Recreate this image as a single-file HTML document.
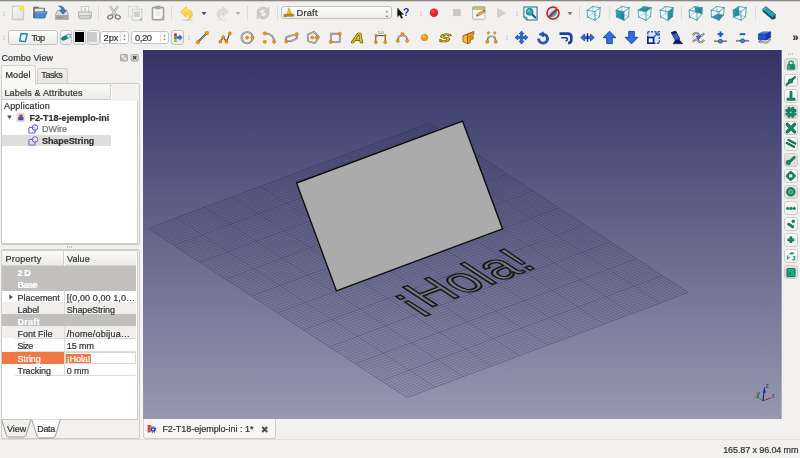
<!DOCTYPE html>
<html><head><meta charset="utf-8"><title>FreeCAD</title><style>
*{box-sizing:border-box;margin:0;padding:0}
html,body{width:800px;height:458px;overflow:hidden;background:#f2f1f0;font-family:"Liberation Sans",sans-serif;font-size:11px;color:#3c3c3c}
.a{position:absolute}
.t{position:absolute;white-space:nowrap;line-height:12px;-webkit-text-stroke:.22px currentColor}
.b{font-weight:bold}
.ic{position:absolute;width:16px;height:16px}
.sep{position:absolute;width:1px;height:14px;background:#dddbd8;top:5.6px}
.hd{position:absolute;width:2px;height:5px;background:repeating-linear-gradient(#d4d1cd 0 1px,transparent 1px 2px)}
.btn{position:absolute;border:1px solid #c4c1bc;border-radius:3px;background:linear-gradient(#fdfdfc,#ecebe9)}
.spin{position:absolute;border:1px solid #c9c6c1;border-radius:3px;background:#fff;height:12.2px;top:31.4px}
</style></head><body>
<div id="root" style="position:absolute;left:0;top:0;width:800px;height:458px;will-change:transform">
<div class="a" style="left:0;top:0;width:800px;height:1px;background:#8a8885"></div>
<div class="a" style="left:0;top:1px;width:800px;height:1px;background:#d5d3d0"></div>
<svg class="ic" style="left:10.0px;top:5.0px;width:16px;height:16px" viewBox="0 0 16 16"><defs><linearGradient id="gn" x1="0" y1="0" x2="1" y2="1"><stop offset="0" stop-color="#f6f6f5"/><stop offset="1" stop-color="#e2e2e0"/></linearGradient></defs><path d="M2.6 14.9H13.6" stroke="#cbc9c6" stroke-width="1"/><path d="M2.4 1.3H13.6V14.2H2.4Z" fill="url(#gn)" stroke="#bdbcb9" stroke-width=".8"/><circle cx="11.8" cy="3.4" r="3.1" fill="#f6ec50" opacity=".55"/><circle cx="11.8" cy="3.4" r="2.1" fill="#f4e62c"/></svg>
<svg class="ic" style="left:32.0px;top:5.0px;width:16px;height:16px" viewBox="0 0 16 16"><path d="M1.6 2H6.2L7.2 3.2H12.6V12.6H1.6Z" fill="#77787a" stroke="#5a5b5d" stroke-width=".7"/><path d="M3 3.8H11.6V9H3Z" fill="#efefee" stroke="#bdbdbb" stroke-width=".4"/><path d="M3.6 6.8H15.2L12.8 13H1.6Z" fill="#4d8ad6" stroke="#2c5c9e" stroke-width=".7" stroke-linejoin="round"/><path d="M4 7.6H14.2" stroke="#7aaae4" stroke-width=".7"/></svg>
<svg class="ic" style="left:54.0px;top:5.0px;width:16px;height:16px" viewBox="0 0 16 16"><path d="M1.6 9.6L3.4 5.4H12.6L14.4 9.6V14.4H1.6Z" fill="#dcdcda" stroke="#9a9a98" stroke-width=".8" stroke-linejoin="round"/><path d="M2 10H14V14H2Z" fill="#a9a9a7"/><path d="M3 12.4H9" stroke="#878785" stroke-width=".8"/><path d="M4.4 1C8.6 .8 10.4 2.6 10.4 5.2H12.6L9 9.2L5.4 5.2H7.6C7.6 3.2 6.6 1.8 4.4 1Z" fill="#3f7fd0" stroke="#2357a0" stroke-width=".6" stroke-linejoin="round"/></svg>
<svg class="ic" style="left:76.5px;top:5.0px;width:16px;height:16px" viewBox="0 0 16 16"><rect x="4.2" y="1.6" width="7.6" height="5.6" fill="#f6f6f5" stroke="#b4b4b2" stroke-width=".7"/><path d="M8 2.8V5.6M6.8 4.4L8 5.8L9.2 4.4" stroke="#b0b0ae" stroke-width=".8" fill="none"/><path d="M1.6 7H14.4V12.4H1.6Z" fill="#e4e4e2" stroke="#a4a4a2" stroke-width=".8" stroke-linejoin="round"/><rect x="2.8" y="10.6" width="10.4" height="3.4" fill="#d2d2d0" stroke="#a4a4a2" stroke-width=".6"/></svg>
<svg class="ic" style="left:105.5px;top:5.0px;width:16px;height:16px" viewBox="0 0 16 16"><path d="M4.2 1.2L9.8 10.2M11.8 1.2L6.2 10.2" stroke="#9c9c9a" stroke-width="2.2" fill="none"/><path d="M4.2 1.2L9.8 10.2M11.8 1.2L6.2 10.2" stroke="#dcdcda" stroke-width="1.1" fill="none"/><ellipse cx="4.2" cy="12" rx="2.6" ry="1.9" transform="rotate(-25 4.2 12)" fill="none" stroke="#7e7e7c" stroke-width="1.3"/><ellipse cx="11.8" cy="12" rx="2.6" ry="1.9" transform="rotate(25 11.8 12)" fill="none" stroke="#7e7e7c" stroke-width="1.3"/></svg>
<svg class="ic" style="left:127.0px;top:5.0px;width:16px;height:16px" viewBox="0 0 16 16"><rect x="1.6" y="1.4" width="9.2" height="10.6" fill="#f3f3f2" stroke="#cfcfcd" stroke-width=".8"/><rect x="5.2" y="4.2" width="9.6" height="11" fill="#f3f3f2" stroke="#c2c2c0" stroke-width=".8"/><rect x="7" y="6.4" width="6" height="5.6" fill="#cfcfcd"/><path d="M12 15.2L14.8 12.6V15.2Z" fill="#a8a8a6"/></svg>
<svg class="ic" style="left:149.5px;top:5.0px;width:16px;height:16px" viewBox="0 0 16 16"><rect x="2.4" y="2.6" width="11.2" height="12.2" rx=".8" fill="#efefee" stroke="#a09f9d" stroke-width="1.5"/><path d="M4.4 5H11.6V13H4.4Z" fill="#f7f7f6"/><path d="M5.4 7H10.4M5.4 8.8H10.4M5.4 10.6H9" stroke="#d6d6d4" stroke-width=".7"/><path d="M10.4 13.6L12.6 11.4V13.6Z" fill="#a09f9d"/><rect x="5.6" y="1.2" width="4.8" height="2.6" rx=".9" fill="#a8a7a5" stroke="#8c8b89" stroke-width=".6"/></svg>
<svg class="ic" style="left:178.5px;top:5.0px;width:16px;height:16px" viewBox="0 0 16 16"><ellipse cx="8.5" cy="15" rx="5.5" ry="1" fill="#d8d6d2"/><path d="M1.6 7L7.2 1.8V4.6C11.6 4.6 13.7 7 13.3 10C13 12.4 11.2 13.8 8.6 14.4C10.2 13.2 10.6 11.6 10 10.4C9.4 9.4 8.4 9.2 7.2 9.2V12.2Z" fill="#f6d838" stroke="#e6bc1e" stroke-width=".7" stroke-linejoin="round"/><path d="M3.2 6.8L6.6 3.6V5.3C9.5 5.3 11.5 6 12.3 8" stroke="#fbee8a" stroke-width=".8" fill="none"/></svg>
<svg class="ic" style="left:195.7px;top:5.0px;width:16px;height:16px" viewBox="0 0 16 16"><path d="M5.4 7.1H10.6L8 10.3Z" fill="#555"/></svg>
<svg class="ic" style="left:213.5px;top:5.0px;width:16px;height:16px" viewBox="0 0 16 16"><ellipse cx="7.5" cy="15" rx="5" ry=".9" fill="#e6e4e1"/><path d="M14.2 6.6L9 1.8V4.4C4.8 4.4 2.6 6.6 3 9.6C3.3 11.8 5 13.2 7.4 13.8C6 12.6 5.6 11.2 6.2 10C6.8 9 7.8 8.8 9 8.8V11.6Z" fill="#dddcda" stroke="#cdccc9" stroke-width=".7" stroke-linejoin="round"/></svg>
<svg class="ic" style="left:230.1px;top:5.0px;width:16px;height:16px" viewBox="0 0 16 16"><path d="M5.4 7.1H10.6L8 10.3Z" fill="#b4b2af"/></svg>
<svg class="ic" style="left:254.5px;top:5.0px;width:16px;height:16px" viewBox="0 0 16 16"><g fill="#cdccca" stroke="#b9b8b5" stroke-width=".5" stroke-linejoin="round"><path d="M2 8C2 4.4 4.6 2 8 2C9.8 2 11.2 2.7 12.2 3.7L14 2V7.4H8.6L10.5 5.5C9.8 4.8 9 4.5 8 4.5C6 4.5 4.6 6 4.6 8Z"/><path d="M14 8C14 11.6 11.4 14 8 14C6.2 14 4.8 13.3 3.8 12.3L2 14V8.6H7.4L5.5 10.5C6.2 11.2 7 11.5 8 11.5C10 11.5 11.4 10 11.4 8Z"/></g></svg>
<svg class="ic" style="left:395.4px;top:5.0px;width:16px;height:16px" viewBox="0 0 16 16"><path d="M2.5 3L2.5 11.8L4.6 9.9L6.2 13.4L7.6 12.8L6 9.4H8.6Z" fill="#111" stroke="#111" stroke-width=".3"/><text x="8" y="11" font-family="Liberation Sans, sans-serif" font-weight="bold" font-size="10.5" fill="#1c2fa0">?</text></svg>
<svg class="ic" style="left:426.0px;top:5.0px;width:16px;height:16px" viewBox="0 0 16 16"><circle cx="8" cy="7.7" r="4.2" fill="#e92424"/><circle cx="7.2" cy="6.6" r="1.8" fill="#f66a6a" opacity=".6"/></svg>
<svg class="ic" style="left:448.5px;top:5.0px;width:16px;height:16px" viewBox="0 0 16 16"><rect x="4.6" y="4.4" width="6.8" height="6.4" fill="#cbcac8" stroke="#bcbbb9" stroke-width=".5"/></svg>
<svg class="ic" style="left:470.5px;top:5.0px;width:16px;height:16px" viewBox="0 0 16 16"><path d="M2 14.8H14" stroke="#d6d4d0" stroke-width="1"/><rect x="1.6" y="1.8" width="12.4" height="12.4" rx=".8" fill="#f8f7f4" stroke="#b0ada6" stroke-width=".8"/><path d="M1.6 2.6Q1.6 1.8 2.4 1.8H13.2Q14 1.8 14 2.6V4.4H1.6Z" fill="#cdbd7c" stroke="#a89a5c" stroke-width=".5"/><path d="M5.4 11.2L6.4 8.8L12.6 5.2L13.8 7L7.8 10.8Z" fill="#eaa43a" stroke="#8a5a1c" stroke-width=".5" stroke-linejoin="round"/><path d="M12.2 5.4L13.6 4.6L14.6 6.4L13.6 7Z" fill="#e04040"/><path d="M5.4 11.2L6 9.8L6.8 10.8Z" fill="#333"/></svg>
<svg class="ic" style="left:493.0px;top:5.0px;width:16px;height:16px" viewBox="0 0 16 16"><path d="M4.6 3.6L12.4 8L4.6 12.4Z" fill="#d2d1cf" stroke="#c2c1be" stroke-width=".6"/></svg>
<svg class="ic" style="left:522.5px;top:5.5px;width:15px;height:15px" viewBox="0 0 16 16"><path d="M1 1H15V15H4.2L1 11.8Z" fill="#f7fbfc" stroke="#1a6a84" stroke-width="1.1"/><path d="M1 11.8H4.2V15" fill="none" stroke="#1a6a84" stroke-width=".8"/><path d="M9.6 8.8L13 12.3" stroke="#0e5f78" stroke-width="2.2" stroke-linecap="round"/><circle cx="7.1" cy="6.2" r="3.7" fill="#2ba6c0" stroke="#0e6f88" stroke-width=".9"/><circle cx="6.2" cy="5.2" r="1.4" fill="#6cc8dc" opacity=".8"/></svg>
<svg class="ic" style="left:545.0px;top:5.0px;width:16px;height:16px" viewBox="0 0 16 16"><ellipse cx="8.5" cy="14.8" rx="5" ry=".9" fill="#d8d6d2"/><circle cx="8" cy="8" r="6" fill="#c4e8ee" stroke="#cc1c1c" stroke-width="1.6"/><path d="M4 11.6C4.6 8 8 5.4 12.4 4.6C12.8 8.6 9.6 12.4 5.2 12.6Z" fill="#2aa8bc"/><path d="M11 3L13.6 1.6L12.6 4.4Z" fill="#f0c020"/><path d="M3.8 12.2L12.2 3.8" stroke="#cc1c1c" stroke-width="1.7"/></svg>
<svg class="ic" style="left:562.3px;top:5.0px;width:16px;height:16px" viewBox="0 0 16 16"><path d="M5.4 7.1H10.6L8 10.3Z" fill="#7c7c7a"/></svg>
<svg class="ic" style="left:586.0px;top:5.0px;width:16px;height:16px" viewBox="0 0 16 16"><defs><linearGradient id="cg" x1="0" y1="0" x2="1" y2="1"><stop offset="0" stop-color="#35a9be"/><stop offset="1" stop-color="#16788e"/></linearGradient></defs><polygon points="1.2,5.2 6.7,1.5 14.2,2.7 13.5,11.7 9,15.3 1.5,12" fill="#f2f9fa"/><path d="M6.8 8.7L6.7 1.5M6.8 8.7L1.5 12M6.8 8.7L13.5 11.7" stroke="#3a9aaa" stroke-opacity=".6" stroke-width=".7" fill="none"/><path d="M1.2 5.2L9 6.7M9 6.7L9 15.3M9 15.3L1.5 12M1.5 12L1.2 5.2M1.2 5.2L6.7 1.5M6.7 1.5L14.2 2.7M14.2 2.7L9 6.7M14.2 2.7L13.5 11.7M13.5 11.7L9 15.3" stroke="#2a8c9e" stroke-width=".75" fill="none" stroke-linejoin="round" stroke-linecap="round"/></svg>
<svg class="ic" style="left:615.0px;top:5.0px;width:16px;height:16px" viewBox="0 0 16 16"><defs><linearGradient id="cg" x1="0" y1="0" x2="1" y2="1"><stop offset="0" stop-color="#35a9be"/><stop offset="1" stop-color="#16788e"/></linearGradient></defs><polygon points="1.2,5.2 6.7,1.5 14.2,2.7 13.5,11.7 9,15.3 1.5,12" fill="#f2f9fa"/><polygon points="1.2,5.2 9,6.7 9,15.3 1.5,12" fill="url(#cg)"/><path d="M6.8 8.7L6.7 1.5M6.8 8.7L1.5 12M6.8 8.7L13.5 11.7" stroke="#3a9aaa" stroke-opacity=".6" stroke-width=".7" fill="none"/><path d="M1.2 5.2L9 6.7M9 6.7L9 15.3M9 15.3L1.5 12M1.5 12L1.2 5.2M1.2 5.2L6.7 1.5M6.7 1.5L14.2 2.7M14.2 2.7L9 6.7M14.2 2.7L13.5 11.7M13.5 11.7L9 15.3" stroke="#2a8c9e" stroke-width=".75" fill="none" stroke-linejoin="round" stroke-linecap="round"/></svg>
<svg class="ic" style="left:637.0px;top:5.0px;width:16px;height:16px" viewBox="0 0 16 16"><defs><linearGradient id="cg" x1="0" y1="0" x2="1" y2="1"><stop offset="0" stop-color="#35a9be"/><stop offset="1" stop-color="#16788e"/></linearGradient></defs><polygon points="1.2,5.2 6.7,1.5 14.2,2.7 13.5,11.7 9,15.3 1.5,12" fill="#f2f9fa"/><polygon points="1.2,5.2 6.7,1.5 14.2,2.7 9,6.7" fill="url(#cg)"/><path d="M6.8 8.7L6.7 1.5M6.8 8.7L1.5 12M6.8 8.7L13.5 11.7" stroke="#3a9aaa" stroke-opacity=".6" stroke-width=".7" fill="none"/><path d="M1.2 5.2L9 6.7M9 6.7L9 15.3M9 15.3L1.5 12M1.5 12L1.2 5.2M1.2 5.2L6.7 1.5M6.7 1.5L14.2 2.7M14.2 2.7L9 6.7M14.2 2.7L13.5 11.7M13.5 11.7L9 15.3" stroke="#2a8c9e" stroke-width=".75" fill="none" stroke-linejoin="round" stroke-linecap="round"/></svg>
<svg class="ic" style="left:659.0px;top:5.0px;width:16px;height:16px" viewBox="0 0 16 16"><defs><linearGradient id="cg" x1="0" y1="0" x2="1" y2="1"><stop offset="0" stop-color="#35a9be"/><stop offset="1" stop-color="#16788e"/></linearGradient></defs><polygon points="1.2,5.2 6.7,1.5 14.2,2.7 13.5,11.7 9,15.3 1.5,12" fill="#f2f9fa"/><polygon points="9,6.7 14.2,2.7 13.5,11.7 9,15.3" fill="url(#cg)"/><path d="M6.8 8.7L6.7 1.5M6.8 8.7L1.5 12M6.8 8.7L13.5 11.7" stroke="#3a9aaa" stroke-opacity=".6" stroke-width=".7" fill="none"/><path d="M1.2 5.2L9 6.7M9 6.7L9 15.3M9 15.3L1.5 12M1.5 12L1.2 5.2M1.2 5.2L6.7 1.5M6.7 1.5L14.2 2.7M14.2 2.7L9 6.7M14.2 2.7L13.5 11.7M13.5 11.7L9 15.3" stroke="#2a8c9e" stroke-width=".75" fill="none" stroke-linejoin="round" stroke-linecap="round"/></svg>
<svg class="ic" style="left:688.0px;top:5.0px;width:16px;height:16px" viewBox="0 0 16 16"><defs><linearGradient id="cg" x1="0" y1="0" x2="1" y2="1"><stop offset="0" stop-color="#35a9be"/><stop offset="1" stop-color="#16788e"/></linearGradient></defs><polygon points="1.2,5.2 6.7,1.5 14.2,2.7 14,8.8 9,15.3 1.5,12" fill="#f2f9fa"/><polygon points="6.7,1.5 14.2,2.7 14,8.8 7.2,7.2" fill="url(#cg)"/><path d="M7.2 7.2L6.7 1.5M7.2 7.2L1.5 12M7.2 7.2L14 8.8" stroke="#3a9aaa" stroke-opacity=".6" stroke-width=".7" fill="none"/><path d="M1.2 5.2L9 6.7M9 6.7L9 15.3M9 15.3L1.5 12M1.5 12L1.2 5.2M1.2 5.2L6.7 1.5M6.7 1.5L14.2 2.7M14.2 2.7L9 6.7M14.2 2.7L14 8.8M14 8.8L9 15.3" stroke="#2a8c9e" stroke-width=".75" fill="none" stroke-linejoin="round" stroke-linecap="round"/></svg>
<svg class="ic" style="left:710.0px;top:5.0px;width:16px;height:16px" viewBox="0 0 16 16"><defs><linearGradient id="cg" x1="0" y1="0" x2="1" y2="1"><stop offset="0" stop-color="#35a9be"/><stop offset="1" stop-color="#16788e"/></linearGradient></defs><polygon points="1.2,5.2 6.7,1.5 14.2,2.7 13.6,9.8 9,15.3 1.5,12" fill="#f2f9fa"/><polygon points="1.5,12 9,15.3 13.6,9.8 7.4,9" fill="url(#cg)"/><path d="M7.4 9L6.7 1.5M7.4 9L1.5 12M7.4 9L13.6 9.8" stroke="#3a9aaa" stroke-opacity=".6" stroke-width=".7" fill="none"/><path d="M1.2 5.2L9 6.7M9 6.7L9 15.3M9 15.3L1.5 12M1.5 12L1.2 5.2M1.2 5.2L6.7 1.5M6.7 1.5L14.2 2.7M14.2 2.7L9 6.7M14.2 2.7L13.6 9.8M13.6 9.8L9 15.3" stroke="#2a8c9e" stroke-width=".75" fill="none" stroke-linejoin="round" stroke-linecap="round"/></svg>
<svg class="ic" style="left:732.0px;top:5.0px;width:16px;height:16px" viewBox="0 0 16 16"><defs><linearGradient id="cg" x1="0" y1="0" x2="1" y2="1"><stop offset="0" stop-color="#35a9be"/><stop offset="1" stop-color="#16788e"/></linearGradient></defs><polygon points="1.2,5.2 6.7,1.5 14.2,2.7 13.5,11.7 9,15.3 1.5,12" fill="#f2f9fa"/><polygon points="1.2,5.2 6.7,1.5 7.4,10.2 1.5,12" fill="url(#cg)"/><path d="M7.4 10.2L6.7 1.5M7.4 10.2L1.5 12M7.4 10.2L13.5 11.7" stroke="#3a9aaa" stroke-opacity=".6" stroke-width=".7" fill="none"/><path d="M1.2 5.2L9 6.7M9 6.7L9 15.3M9 15.3L1.5 12M1.5 12L1.2 5.2M1.2 5.2L6.7 1.5M6.7 1.5L14.2 2.7M14.2 2.7L9 6.7M14.2 2.7L13.5 11.7M13.5 11.7L9 15.3" stroke="#2a8c9e" stroke-width=".75" fill="none" stroke-linejoin="round" stroke-linecap="round"/></svg>
<svg class="ic" style="left:761.0px;top:5.0px;width:16px;height:16px" viewBox="0 0 16 16"><path d="M1.6 4.4L4.8 1.6L14.6 9.6V13.6L11.2 14.8L1.6 6.4Z" fill="#154a5c"/><path d="M1.6 4.4L4.8 1.6L14.6 9.6L11.4 12.4Z" fill="#25a2b8" stroke="#0f6478" stroke-width=".6" stroke-linejoin="round"/><path d="M2.6 4.4L5 2.6" stroke="#7fd4e0" stroke-width=".8"/></svg>
<div class="sep" style="left:98px"></div>
<div class="sep" style="left:171px"></div>
<div class="sep" style="left:247px"></div>
<div class="sep" style="left:277px"></div>
<div class="sep" style="left:579px"></div>
<div class="sep" style="left:609px"></div>
<div class="sep" style="left:681px"></div>
<div class="sep" style="left:755px"></div>
<div class="hd" style="left:2.5px;top:11px"></div>
<div class="hd" style="left:419.5px;top:11px"></div>
<div class="hd" style="left:515.5px;top:11px"></div>
<div class="hd" style="left:2.5px;top:35.3px"></div>
<div class="hd" style="left:187.8px;top:35.3px"></div>
<div class="hd" style="left:505.5px;top:35.3px"></div>
<div class="btn" style="left:280.6px;top:5.6px;width:111.3px;height:13.9px"></div>
<svg class="ic" style="left:283.0px;top:6.5px;width:12px;height:12px" viewBox="0 0 16 16"><path d="M7.3 1L11.9 9.8H6Z" fill="#f4cc10" stroke="#a07800" stroke-width=".6" stroke-linejoin="round"/><path d="M9 2V9.8" stroke="#c89a00" stroke-width=".6"/><path d="M1.3 9.8H14.3V12.3H4.3V12.9H1.3Z" fill="#d0820a" stroke="#8a5200" stroke-width=".6"/></svg>
<div class="t" style="left:296.5px;top:7.23px;font-size:9.3px;letter-spacing:0.212px;color:#353535;">Draft</div>
<svg class="a" style="left:383.5px;top:7px;width:6px;height:12px" viewBox="0 0 6 12"><path d="M1.5 5.3L3 3.4L4.5 5.3ZM1.5 8.7L3 10.6L4.5 8.7Z" fill="#888"/></svg>
<div class="btn" style="left:7.7px;top:30.2px;width:50.3px;height:14.4px"></div>
<svg class="ic" style="left:18.4px;top:31.8px;width:11px;height:11px" viewBox="0 0 16 16"><polygon points="4.6,2.2 13.4,3 10.6,14 2.4,13" fill="#f4fafa" stroke="#2496a4" stroke-width="2.1" stroke-linejoin="round"/><polygon points="4.6,2.2 13.4,3 10.6,14 2.4,13" fill="none" stroke="#0a4a56" stroke-width="1" stroke-dasharray="1.2 1.6"/></svg>
<div class="t" style="left:31.5px;top:31.63px;font-size:9.3px;letter-spacing:-0.647px;color:#353535;">Top</div>
<div class="btn" style="left:60px;top:30px;width:12px;height:15px"></div>
<svg class="ic" style="left:60.5px;top:32.0px;width:10.5px;height:10.5px" viewBox="0 0 16 16"><g transform="rotate(-24 8 8)"><rect x="6.4" y="5.2" width="9.4" height="5.4" rx="2.7" fill="#d4ecec" stroke="#1a8a94" stroke-width="1.1"/><rect x=".4" y="5.4" width="9" height="5.2" rx="2.6" fill="#128a92" stroke="#0a5a64" stroke-width=".8"/></g></svg>
<div class="btn" style="left:73px;top:30px;width:13px;height:15px"></div><div class="a" style="left:74.7px;top:32.4px;width:9.3px;height:9.6px;background:#000"></div>
<div class="btn" style="left:86.5px;top:30px;width:13px;height:15px"></div><div class="a" style="left:88.3px;top:32.4px;width:8.7px;height:9.6px;background:#ccc"></div>
<div class="spin" style="left:100.4px;width:28.6px"></div>
<div class="t" style="left:103.5px;top:31.73px;font-size:9.3px;letter-spacing:0.003px;color:#353535;">2px</div>
<div class="spin" style="left:131.2px;width:37.6px"></div>
<div class="t" style="left:135.0px;top:31.63px;font-size:9.3px;letter-spacing:-0.366px;color:#353535;">0,20</div>
<svg class="a" style="left:122.0px;top:32px;width:5px;height:11px" viewBox="0 0 5 11"><path d="M1.2 4.4L2.5 2.8L3.8 4.4ZM1.2 6.8L2.5 8.4L3.8 6.8Z" fill="#777"/></svg>
<div class="a" style="left:120.0px;top:31.8px;width:1px;height:10.6px;background:#e2e0dd"></div>
<svg class="a" style="left:161.5px;top:32px;width:5px;height:11px" viewBox="0 0 5 11"><path d="M1.2 4.4L2.5 2.8L3.8 4.4ZM1.2 6.8L2.5 8.4L3.8 6.8Z" fill="#777"/></svg>
<div class="a" style="left:159.5px;top:31.8px;width:1px;height:10.6px;background:#e2e0dd"></div>
<div class="btn" style="left:170.5px;top:30px;width:13px;height:15px"></div>
<svg class="ic" style="left:171.5px;top:32.0px;width:11px;height:11px" viewBox="0 0 16 16"><rect x="3" y="2" width="4" height="4" fill="#e02020"/><rect x="3" y="6.2" width="4" height="4" fill="#20b020"/><rect x="3" y="10.4" width="4" height="4" fill="#e0a020"/><path d="M7.5 6.5H11V4L15 8L11 12V9.5H7.5Z" fill="#2f6fe0" stroke="#0a2a80" stroke-width=".5"/></svg>
<svg class="ic" style="left:195.0px;top:29.5px;width:15px;height:15px" viewBox="0 0 16 16"><path d="M3 13L12.6 3.4" stroke="#4a4a4a" stroke-width="2"/><path d="M3 13L12.6 3.4" stroke="#c4c4c4" stroke-width=".7"/><circle cx="3" cy="13" r="1.9" fill="#f5a000" stroke="#a86400" stroke-width=".5"/><circle cx="12.8" cy="3.2" r="1.9" fill="#f5a000" stroke="#a86400" stroke-width=".5"/></svg>
<svg class="ic" style="left:217.5px;top:29.5px;width:15px;height:15px" viewBox="0 0 16 16"><path d="M2.5 12.5L5.6 7.6L9 12.5L12.6 3.6" stroke="#4a4a4a" stroke-width="1.3" fill="none"/><circle cx="2.5" cy="12.5" r="1.7" fill="#f5a000" stroke="#a86400" stroke-width=".5"/><circle cx="5.6" cy="7.6" r="1.7" fill="#f5a000" stroke="#a86400" stroke-width=".5"/><circle cx="9" cy="12.5" r="1.7" fill="#f5a000" stroke="#a86400" stroke-width=".5"/><circle cx="12.6" cy="3.6" r="1.7" fill="#f5a000" stroke="#a86400" stroke-width=".5"/></svg>
<svg class="ic" style="left:239.5px;top:29.5px;width:15px;height:15px" viewBox="0 0 16 16"><path d="M1.6 8.2A6 6 0 1 0 13.6 8.2A6 6 0 1 0 1.6 8.2Z" fill="none" stroke="#707070" stroke-width="2.0" stroke-linejoin="round" /><path d="M1.6 8.2A6 6 0 1 0 13.6 8.2A6 6 0 1 0 1.6 8.2Z" fill="none" stroke="#cfcfcf" stroke-width="0.90" stroke-linejoin="round" /><circle cx="7.6" cy="8.2" r="1.7" fill="#f5a000" stroke="#a86400" stroke-width=".5"/><circle cx="13.2" cy="8.2" r="1.7" fill="#f5a000" stroke="#a86400" stroke-width=".5"/></svg>
<svg class="ic" style="left:261.5px;top:29.5px;width:15px;height:15px" viewBox="0 0 16 16"><path d="M3 3.6C9 3.6 13 7 13 12.6" fill="none" stroke="#707070" stroke-width="2.0" stroke-linejoin="round" /><path d="M3 3.6C9 3.6 13 7 13 12.6" fill="none" stroke="#cfcfcf" stroke-width="0.90" stroke-linejoin="round" /><circle cx="3" cy="3.6" r="1.7" fill="#f5a000" stroke="#a86400" stroke-width=".5"/><circle cx="13" cy="12.6" r="1.7" fill="#f5a000" stroke="#a86400" stroke-width=".5"/><circle cx="3" cy="12.6" r="1.7" fill="#f5a000" stroke="#a86400" stroke-width=".5"/></svg>
<svg class="ic" style="left:283.5px;top:29.5px;width:15px;height:15px" viewBox="0 0 16 16"><g transform="rotate(-14 8 8.6)"><path d="M1.6 8.6A6.4 2.7 0 1 0 14.4 8.6A6.4 2.7 0 1 0 1.6 8.6Z" fill="none" stroke="#707070" stroke-width="1.9" stroke-linejoin="round" /><path d="M1.6 8.6A6.4 2.7 0 1 0 14.4 8.6A6.4 2.7 0 1 0 1.6 8.6Z" fill="none" stroke="#cfcfcf" stroke-width="0.85" stroke-linejoin="round" /></g><circle cx="2.6" cy="12.2" r="1.7" fill="#f5a000" stroke="#a86400" stroke-width=".5"/><circle cx="13.6" cy="4.4" r="1.7" fill="#f5a000" stroke="#a86400" stroke-width=".5"/></svg>
<svg class="ic" style="left:306.0px;top:29.5px;width:15px;height:15px" viewBox="0 0 16 16"><path d="M1.8 4.8L8.4 2L13.8 7.6L9.6 14L2.2 12Z" fill="none" stroke="#707070" stroke-width="1.9" stroke-linejoin="round" /><path d="M1.8 4.8L8.4 2L13.8 7.6L9.6 14L2.2 12Z" fill="none" stroke="#cfcfcf" stroke-width="0.85" stroke-linejoin="round" /><circle cx="6.6" cy="8" r="1.7" fill="#f5a000" stroke="#a86400" stroke-width=".5"/><circle cx="11.2" cy="8" r="1.7" fill="#f5a000" stroke="#a86400" stroke-width=".5"/></svg>
<svg class="ic" style="left:328.0px;top:29.5px;width:15px;height:15px" viewBox="0 0 16 16"><path d="M3 4H12.6V12.6H3Z" fill="none" stroke="#707070" stroke-width="1.9" stroke-linejoin="round" /><path d="M3 4H12.6V12.6H3Z" fill="none" stroke="#cfcfcf" stroke-width="0.85" stroke-linejoin="round" /><circle cx="3" cy="12.8" r="1.7" fill="#f5a000" stroke="#a86400" stroke-width=".5"/><circle cx="12.6" cy="4" r="1.7" fill="#f5a000" stroke="#a86400" stroke-width=".5"/></svg>
<svg class="ic" style="left:351.0px;top:29.5px;width:15px;height:15px" viewBox="0 0 16 16"><text x="0" y="14" font-family="Liberation Sans, sans-serif" font-weight="bold" font-style="italic" font-size="16" fill="#f0c800" stroke="#5a4800" stroke-width=".6" transform="scale(1.22 1)">A</text></svg>
<svg class="ic" style="left:372.5px;top:29.5px;width:15px;height:15px" viewBox="0 0 16 16"><path d="M3 5V13M13 5V13M3 6H13" stroke="#333" stroke-width="1" fill="none"/><text x="5" y="4.5" font-family="Liberation Sans, sans-serif" font-size="4.5" fill="#444">1.0</text><circle cx="3" cy="13" r="1.6" fill="#f5a000" stroke="#a86400" stroke-width=".5"/><circle cx="13" cy="13" r="1.6" fill="#f5a000" stroke="#a86400" stroke-width=".5"/><circle cx="3" cy="6" r="1.2" fill="#f5a000" stroke="#a86400" stroke-width=".5"/><circle cx="13" cy="6" r="1.2" fill="#f5a000" stroke="#a86400" stroke-width=".5"/></svg>
<svg class="ic" style="left:394.5px;top:29.5px;width:15px;height:15px" viewBox="0 0 16 16"><path d="M3 11.6C2.4 3.6 13.6 3.6 13 11.6" fill="none" stroke="#707070" stroke-width="1.9" stroke-linejoin="round" /><path d="M3 11.6C2.4 3.6 13.6 3.6 13 11.6" fill="none" stroke="#cfcfcf" stroke-width="0.85" stroke-linejoin="round" /><circle cx="3" cy="11.6" r="1.7" fill="#f5a000" stroke="#a86400" stroke-width=".5"/><circle cx="13" cy="11.6" r="1.7" fill="#f5a000" stroke="#a86400" stroke-width=".5"/><circle cx="8" cy="4.2" r="1.7" fill="#f5a000" stroke="#a86400" stroke-width=".5"/></svg>
<svg class="ic" style="left:416.5px;top:29.5px;width:15px;height:15px" viewBox="0 0 16 16"><circle cx="8" cy="8" r="3.4" fill="#f5a000" stroke="#a86400" stroke-width=".6"/><circle cx="7" cy="7" r="1.3" fill="#ffd470"/></svg>
<svg class="ic" style="left:439.0px;top:29.5px;width:15px;height:15px" viewBox="0 0 16 16"><text x="0" y="12.6" font-family="Liberation Sans, sans-serif" font-style="italic" font-weight="bold" font-size="12.5" fill="#f0cc00" stroke="#4a3c00" stroke-width=".55" transform="translate(1 0) skewX(-12) scale(1.62 1)">S</text></svg>
<svg class="ic" style="left:461.0px;top:29.5px;width:15px;height:15px" viewBox="0 0 16 16"><path d="M2 6.2L7 4.2V14.6L2 12.4Z" fill="#ffb830" stroke="#6a4200" stroke-width=".6" stroke-linejoin="round"/><path d="M7 4.2L13.8 1.6V5L10 6.4V7.8L13 6.8V9.6L10 10.6V13.4L7 14.6Z" fill="#f09c00" stroke="#6a4200" stroke-width=".6" stroke-linejoin="round"/><path d="M2 6.2L8.6 3.6L13.8 1.6" fill="none" stroke="#6a4200" stroke-width=".5"/></svg>
<svg class="ic" style="left:483.5px;top:29.5px;width:15px;height:15px" viewBox="0 0 16 16"><path d="M3.5 12.6C4 4.6 12 4.6 12.5 12.6" fill="none" stroke="#707070" stroke-width="1.7" stroke-linejoin="round" /><path d="M3.5 12.6C4 4.6 12 4.6 12.5 12.6" fill="none" stroke="#cfcfcf" stroke-width="0.77" stroke-linejoin="round" /><path d="M3.5 12.6L4.6 3M12.5 12.6L11.4 3" stroke="#555" stroke-width=".5" stroke-dasharray="1 1"/><circle cx="3.5" cy="12.6" r="1.7" fill="#f5a000" stroke="#a86400" stroke-width=".5"/><circle cx="12.5" cy="12.6" r="1.7" fill="#f5a000" stroke="#a86400" stroke-width=".5"/><circle cx="4.6" cy="3" r="1.2" fill="#f5a000" stroke="#a86400" stroke-width=".5"/><circle cx="11.4" cy="3" r="1.2" fill="#f5a000" stroke="#a86400" stroke-width=".5"/></svg>
<svg class="ic" style="left:513.5px;top:29.5px;width:15px;height:15px" viewBox="0 0 16 16"><path d="M8 1L10.6 4.2H9V7H11.8V5.4L15 8L11.8 10.6V9H9V11.8H10.6L8 15L5.4 11.8H7V9H4.2V10.6L1 8L4.2 5.4V7H7V4.2H5.4Z" fill="#2f6fe0" stroke="#0a2a80" stroke-width=".6" stroke-linejoin="round"/></svg>
<svg class="ic" style="left:535.0px;top:29.5px;width:15px;height:15px" viewBox="0 0 16 16"><path d="M3.9 9.3A4.7 4.7 0 1 0 8.6 4.6" fill="none" stroke="#0a2a80" stroke-width="3"/><path d="M3.9 9.3A4.7 4.7 0 1 0 8.6 4.6" fill="none" stroke="#2f62d4" stroke-width="2"/><path d="M4.2 4.6L8.9 2V7.3Z" fill="#2f62d4" stroke="#0a2a80" stroke-width=".6" stroke-linejoin="round"/></svg>
<svg class="ic" style="left:557.5px;top:29.5px;width:15px;height:15px" viewBox="0 0 16 16"><path d="M1.6 3.8H10.6C13.2 3.8 14.2 5.2 14.2 7.4V10.6C14.2 12.6 13 13.8 10.8 14.2" fill="none" stroke="#1c3ea4" stroke-width="2.8"/><path d="M3.4 8.2H8.4C9.6 8.2 10 8.8 10 9.8C10 11 9.4 11.6 8 11.8" fill="none" stroke="#1c3ea4" stroke-width="1.7"/></svg>
<svg class="ic" style="left:579.5px;top:29.5px;width:15px;height:15px" viewBox="0 0 16 16"><path d="M.8 8L4.8 4.3V6.8H11.2V4.3L15.2 8L11.2 11.7V9.2H4.8V11.7Z" fill="#2f6fe0" stroke="#0a2a80" stroke-width=".7" stroke-linejoin="round"/><path d="M8 3.5V12.5" stroke="#0a2a80" stroke-width="1.5"/></svg>
<svg class="ic" style="left:602.0px;top:29.5px;width:15px;height:15px" viewBox="0 0 16 16"><path d="M8 1.2L14.8 8.2H11V14.5H5V8.2H1.2Z" fill="#2f6fe0" stroke="#0a2a80" stroke-width=".8" stroke-linejoin="round"/></svg>
<svg class="ic" style="left:624.0px;top:29.5px;width:15px;height:15px" viewBox="0 0 16 16"><path d="M8 14.8L14.8 7.8H11V1.5H5V7.8H1.2Z" fill="#2f6fe0" stroke="#0a2a80" stroke-width=".8" stroke-linejoin="round"/></svg>
<svg class="ic" style="left:646.0px;top:29.5px;width:15px;height:15px" viewBox="0 0 16 16"><rect x="1.8" y="1.8" width="12.4" height="12.4" fill="#dbe6fa" stroke="#2a5bc0" stroke-width="1.5" stroke-dasharray="2.2 1.4"/><rect x="2" y="8" width="6" height="6" fill="#fff" stroke="#0a2a80" stroke-width="1.8"/><path d="M8.5 7.5L12.5 3.5M9.5 3.3H12.7V6.5" stroke="#2a5bc0" stroke-width="1.4" fill="none"/></svg>
<svg class="ic" style="left:668.5px;top:29.5px;width:15px;height:15px" viewBox="0 0 16 16"><path d="M4.4 14.6L8.6 8L14.6 14.6Z" fill="#0c1c6a" stroke="#060e40" stroke-width=".6" stroke-linejoin="round"/><path d="M2.4 2.6L7.2 1.2L11.6 9.6L7 11.4Z" fill="#2f66d8" stroke="#0a1a60" stroke-width=".8" stroke-linejoin="round"/><path d="M2.4 2.6L7.2 1.2L8.2 3.2L3.4 4.8Z" fill="#101a50"/></svg>
<svg class="ic" style="left:690.5px;top:29.5px;width:15px;height:15px" viewBox="0 0 16 16"><path d="M2 5.6C4.6 2.4 6.4 2.4 8 4.6C9.6 6.8 11.4 6.8 14 3.6" fill="none" stroke="#707070" stroke-width="2.3" stroke-linejoin="round" /><path d="M2 5.6C4.6 2.4 6.4 2.4 8 4.6C9.6 6.8 11.4 6.8 14 3.6" fill="none" stroke="#cfcfcf" stroke-width="1.03" stroke-linejoin="round" /><path d="M2 12.6C4.6 9.4 6.4 9.4 8 11.6C9.6 13.8 11.4 13.8 14 10.6" fill="none" stroke="#707070" stroke-width="2.3" stroke-linejoin="round" /><path d="M2 12.6C4.6 9.4 6.4 9.4 8 11.6C9.6 13.8 11.4 13.8 14 10.6" fill="none" stroke="#cfcfcf" stroke-width="1.03" stroke-linejoin="round" /><path d="M5.4 6.6H10.6L8 10.2Z" fill="#2f6fe0" stroke="#0a2a80" stroke-width=".6"/></svg>
<svg class="ic" style="left:712.5px;top:29.5px;width:15px;height:15px" viewBox="0 0 16 16"><path d="M1 12H15" stroke="#7c7c7c" stroke-width="1.8"/><circle cx="8" cy="12" r="2.2" fill="#3f83f0" stroke="#0a2a80" stroke-width=".6"/><path d="M8 1.5V7.5M5 4.5H11" stroke="#1c50c8" stroke-width="2"/></svg>
<svg class="ic" style="left:734.5px;top:29.5px;width:15px;height:15px" viewBox="0 0 16 16"><path d="M1 11.5H15" stroke="#7c7c7c" stroke-width="1.8"/><circle cx="8" cy="11.5" r="2.2" fill="#3f83f0" stroke="#0a2a80" stroke-width=".6"/><path d="M5 4.5H11" stroke="#1c50c8" stroke-width="2"/></svg>
<svg class="ic" style="left:756.5px;top:29.5px;width:15px;height:15px" viewBox="0 0 16 16"><path d="M2 12L6 10H14.5L10.5 12.8Z M2 12V13.2L10.5 14.2L14.5 11.2" fill="#e8e8e8" stroke="#555" stroke-width=".6"/><path d="M1.5 4.5L6 2H14.5L10 4.5Z" fill="#5a92f0" stroke="#0a2a80" stroke-width=".6"/><path d="M1.5 4.5H10V10.5H1.5Z" fill="#1c50d8" stroke="#0a2a80" stroke-width=".6"/><path d="M10 4.5L14.5 2V8L10 10.5Z" fill="#123aa8" stroke="#0a2a80" stroke-width=".6"/></svg>
<div class="t b" style="left:792.5px;top:31.36px;font-size:11px;letter-spacing:-0.617px;color:#333;">»</div>
<div class="a" style="left:142px;top:49px;width:640px;height:1px;background:#faf9f8"></div><div class="a" style="left:141px;top:49px;width:2px;height:390px;background:#f8f7f6"></div>
<svg id="view" width="638.7" height="369.2" viewBox="0 0 638.7 369.2" style="position:absolute;left:143px;top:50px">
<defs><linearGradient id="bg" x1="0" y1="0" x2="0" y2="1"><stop offset="0" stop-color="#333366"/><stop offset="1" stop-color="#9898b0"/></linearGradient><filter id="nop" x="-0.1" y="-0.1" width="1.2" height="1.2"><feOffset dx="0" dy="0"/></filter></defs>
<rect width="638.7" height="369.2" fill="url(#bg)"/>
<path d="M8.01 177.35L266.91 346.55M7.79 180.09L288.89 74.99M10.82 176.30L269.72 345.50M10.38 181.78L291.48 76.68M13.63 175.25L272.53 344.45M12.97 183.48L294.07 78.38M16.44 174.20L275.34 343.40M15.56 185.17L296.66 80.07M19.25 173.15L278.15 342.35M18.14 186.86L299.25 81.76M22.07 172.09L280.97 341.29M20.73 188.55L301.83 83.45M24.88 171.04L283.78 340.24M23.32 190.24L304.42 85.14M27.69 169.99L286.59 339.19M25.91 191.94L307.01 86.84M30.50 168.94L289.40 338.14M28.50 193.63L309.60 88.53M36.12 166.84L295.02 336.04M33.68 197.01L314.78 91.91M38.93 165.79L297.83 334.99M36.27 198.70L317.37 93.60M41.74 164.74L300.64 333.94M38.86 200.40L319.96 95.30M44.55 163.69L303.45 332.89M41.45 202.09L322.55 96.99M47.36 162.63L306.26 331.83M44.03 203.78L325.13 98.68M50.18 161.58L309.08 330.78M46.62 205.47L327.72 100.37M52.99 160.53L311.89 329.73M49.21 207.16L330.31 102.06M55.80 159.48L314.70 328.68M51.80 208.86L332.90 103.76M58.61 158.43L317.51 327.63M54.39 210.55L335.49 105.45M64.23 156.33L323.13 325.53M59.57 213.93L340.67 108.83M67.04 155.28L325.94 324.48M62.16 215.62L343.26 110.52M69.85 154.23L328.75 323.43M64.75 217.32L345.85 112.22M72.66 153.18L331.56 322.38M67.34 219.01L348.44 113.91M75.47 152.12L334.38 321.32M69.92 220.70L351.02 115.60M78.29 151.07L337.19 320.27M72.51 222.39L353.61 117.29M81.10 150.02L340.00 319.22M75.10 224.08L356.20 118.98M83.91 148.97L342.81 318.17M77.69 225.78L358.79 120.68M86.72 147.92L345.62 317.12M80.28 227.47L361.38 122.37M92.34 145.82L351.24 315.02M85.46 230.85L366.56 125.75M95.15 144.77L354.05 313.97M88.05 232.54L369.15 127.44M97.96 143.72L356.86 312.92M90.64 234.24L371.74 129.14M100.77 142.67L359.67 311.87M93.23 235.93L374.33 130.83M103.58 141.62L362.48 310.81M95.81 237.62L376.91 132.52M106.40 140.56L365.30 309.76M98.40 239.31L379.50 134.21M109.21 139.51L368.11 308.71M100.99 241.00L382.09 135.90M112.02 138.46L370.92 307.66M103.58 242.70L384.68 137.60M114.83 137.41L373.73 306.61M106.17 244.39L387.27 139.29M120.45 135.31L379.35 304.51M111.35 247.77L392.45 142.67M123.26 134.26L382.16 303.46M113.94 249.46L395.04 144.36M126.07 133.21L384.97 302.41M116.53 251.16L397.63 146.06M128.88 132.16L387.78 301.36M119.12 252.85L400.22 147.75M131.69 131.11L390.60 300.31M121.70 254.54L402.80 149.44M134.51 130.05L393.41 299.25M124.29 256.23L405.39 151.13M137.32 129.00L396.22 298.20M126.88 257.92L407.98 152.82M140.13 127.95L399.03 297.15M129.47 259.62L410.57 154.52M142.94 126.90L401.84 296.10M132.06 261.31L413.16 156.21M148.56 124.80L407.46 294.00M137.24 264.69L418.34 159.59M151.37 123.75L410.27 292.95M139.83 266.38L420.93 161.28M154.18 122.70L413.08 291.90M142.42 268.08L423.52 162.98M156.99 121.65L415.89 290.85M145.01 269.77L426.11 164.67M159.81 120.59L418.70 289.79M147.59 271.46L428.69 166.36M162.62 119.54L421.52 288.74M150.18 273.15L431.28 168.05M165.43 118.49L424.33 287.69M152.77 274.84L433.87 169.74M168.24 117.44L427.14 286.64M155.36 276.54L436.46 171.44M171.05 116.39L429.95 285.59M157.95 278.23L439.05 173.13M176.67 114.29L435.57 283.49M163.13 281.61L444.23 176.51M179.48 113.24L438.38 282.44M165.72 283.30L446.82 178.20M182.29 112.19L441.19 281.39M168.31 285.00L449.41 179.90M185.10 111.14L444.00 280.34M170.90 286.69L452.00 181.59M187.91 110.09L446.81 279.28M173.49 288.38L454.59 183.28M190.73 109.03L449.63 278.23M176.07 290.07L457.17 184.97M193.54 107.98L452.44 277.18M178.66 291.76L459.76 186.66M196.35 106.93L455.25 276.13M181.25 293.46L462.35 188.36M199.16 105.88L458.06 275.08M183.84 295.15L464.94 190.05M204.78 103.78L463.68 272.98M189.02 298.53L470.12 193.43M207.59 102.73L466.49 271.93M191.61 300.22L472.71 195.12M210.40 101.68L469.30 270.88M194.20 301.92L475.30 196.82M213.21 100.63L472.11 269.83M196.79 303.61L477.89 198.51M216.02 99.57L474.92 268.77M199.38 305.30L480.48 200.20M218.84 98.52L477.74 267.72M201.96 306.99L483.06 201.89M221.65 97.47L480.55 266.67M204.55 308.68L485.65 203.58M224.46 96.42L483.36 265.62M207.14 310.38L488.24 205.28M227.27 95.37L486.17 264.57M209.73 312.07L490.83 206.97M232.89 93.27L491.79 262.47M214.91 315.45L496.01 210.35M235.70 92.22L494.60 261.42M217.50 317.14L498.60 212.04M238.51 91.17L497.41 260.37M220.09 318.84L501.19 213.74M241.32 90.12L500.22 259.32M222.68 320.53L503.78 215.43M244.13 89.06L503.03 258.26M225.26 322.22L506.37 217.12M246.95 88.01L505.85 257.21M227.85 323.91L508.95 218.81M249.76 86.96L508.66 256.16M230.44 325.60L511.54 220.50M252.57 85.91L511.47 255.11M233.03 327.30L514.13 222.20M255.38 84.86L514.28 254.06M235.62 328.99L516.72 223.89M261.00 82.76L519.90 251.96M240.80 332.37L521.90 227.27M263.81 81.71L522.71 250.91M243.39 334.06L524.49 228.96M266.62 80.66L525.52 249.86M245.98 335.76L527.08 230.66M269.43 79.61L528.33 248.81M248.57 337.45L529.67 232.35M272.25 78.56L531.14 247.75M251.15 339.14L532.25 234.04M275.06 77.50L533.96 246.70M253.74 340.83L534.84 235.73M277.87 76.45L536.77 245.65M256.33 342.52L537.43 237.42M280.68 75.40L539.58 244.60M258.92 344.22L540.02 239.12M283.49 74.35L542.39 243.55M261.51 345.91L542.61 240.81" stroke="#1e1e46" stroke-opacity=".29" stroke-width=".5" fill="none"/>
<path d="M5.20 178.40L264.10 347.60M5.20 178.40L286.30 73.30M33.31 167.89L292.21 337.09M31.09 195.32L312.19 90.22M61.42 157.38L320.32 326.58M56.98 212.24L338.08 107.14M89.53 146.87L348.43 316.07M82.87 229.16L363.97 124.06M117.64 136.36L376.54 305.56M108.76 246.08L389.86 140.98M145.75 125.85L404.65 295.05M134.65 263.00L415.75 157.90M173.86 115.34L432.76 284.54M160.54 279.92L441.64 174.82M201.97 104.83L460.87 274.03M186.43 296.84L467.53 191.74M230.08 94.32L488.98 263.52M212.32 313.76L493.42 208.66M258.19 83.81L517.09 253.01M238.21 330.68L519.31 225.58M286.30 73.30L545.20 242.50M264.10 347.60L545.20 242.50" stroke="#1e1e46" stroke-opacity=".46" stroke-width=".65" fill="none"/>
<g filter="url(#nop)"><text transform="matrix(2.8110,-1.0510,2.5890,1.6920,270.2,263.8)" font-family="Liberation Sans, sans-serif" font-size="16.7" fill="#76767c" stroke="#15151b" stroke-width=".6">¡Hola!</text></g>
<polygon points="153.6,133.0 319.6,71.2 359.6,178.9 193.4,240.8" fill="#ababab" stroke="#0c0c0c" stroke-width="1.35" stroke-linejoin="miter"/>
<g filter="url(#nop)" transform="translate(620,350.8)" font-family="Liberation Sans, sans-serif" font-size="7" fill="#3a3a44">
<path d="M0 0L7.8-2.8" stroke="#a82222" stroke-width="1"/><path d="M0 0L-7-4.4" stroke="#1e9e2a" stroke-width="1"/><path d="M-7.6-4.8L-4.6-4.2L-5.6-2.6Z" fill="#1e9e2a"/><path d="M0 0L1.5-13" stroke="#1a1aa4" stroke-width="1.1"/><path d="M1.6-13.6L.2-8.2L2.6-8Z" fill="#1a1aa4"/>
<text x="8.6" y="-2.6">x</text><text x="-6.4" y="-5.2">y</text><text x="2.6" y="-12.4">z</text></g>
</svg>
<div class="t" style="left:1.5px;top:51.73px;font-size:9.0px;letter-spacing:0.072px;color:#353535;">Combo View</div>
<svg class="a" style="left:120px;top:53.8px;width:19px;height:8px" viewBox="0 0 19 8"><rect x=".4" y=".3" width="7" height="6.8" rx="1.2" fill="#c2c1bf" stroke="#8f8e8c" stroke-width=".7"/><rect x="1.6" y="1.4" width="2" height="2" fill="#f4f4f3"/><rect x="4.2" y="4" width="2" height="2" fill="#f4f4f3"/><path d="M3.4 3.2L4.6 4.4" stroke="#e8e8e7" stroke-width=".8"/><rect x="11.2" y=".3" width="7" height="6.8" rx="1.2" fill="#dcdbd9" stroke="#8f8e8c" stroke-width=".7"/><path d="M13 2L16.4 5.4M16.4 2L13 5.4" stroke="#3c3c3c" stroke-width="1.2"/></svg>
<div class="a" style="left:36.5px;top:67.5px;width:31px;height:16px;border:1px solid #d0cdc9;border-bottom:none;border-radius:3px 3px 0 0;background:linear-gradient(#efeeec,#e6e4e1)"></div>
<div class="a" style="left:1px;top:83px;width:139px;height:162px;border:1px solid #d0cdc9;border-radius:2px;background:#f2f1f0"></div>
<div class="a" style="left:0.8px;top:65px;width:35.4px;height:19.5px;border:1px solid #d4d1cd;border-bottom:none;border-radius:3px 3px 0 0;background:#f8f8f7"></div>
<div class="t" style="left:5.4px;top:69.03px;font-size:9.0px;letter-spacing:0.147px;color:#353535;">Model</div>
<div class="t" style="left:41.3px;top:69.03px;font-size:9.0px;letter-spacing:-0.401px;color:#353535;">Tasks</div>
<div class="a" style="left:1.4px;top:84.5px;width:137.1px;height:159.5px;background:#fff;border:1px solid #cfccc8"></div>
<div class="a" style="left:2.2px;top:85px;width:109.3px;height:15px;background:linear-gradient(#fafaf9,#ecebe9);border-right:1px solid #d5d2ce;border-bottom:1px solid #cdcac6"></div>
<div class="a" style="left:111.5px;top:85px;width:26.5px;height:15.5px;background:#f3f2f1"></div>
<div class="t" style="left:4.4px;top:87.33px;font-size:9.0px;letter-spacing:0.170px;color:#353535;">Labels &amp; Attributes</div>
<div class="t" style="left:4.0px;top:100.23px;font-size:9.0px;letter-spacing:0.177px;color:#353535;">Application</div>
<svg class="a" style="left:6.9px;top:115.3px;width:5px;height:5px" viewBox="0 0 5 5"><path d="M.3 .6H4.7L2.5 4.4Z" fill="#505050"/></svg>
<svg class="ic" style="left:16.3px;top:113.0px;width:9.2px;height:9.2px" viewBox="0 0 16 16"><rect x="1.6" y=".8" width="12.8" height="14.4" rx=".6" fill="#e2e2e1" stroke="#c4c4c2" stroke-width=".8"/><ellipse cx="8.6" cy="4.6" rx="3.2" ry="2.2" fill="#e02828"/><path d="M4 6.8H12.8V12.6H4Z" fill="#2238b8"/><path d="M4 8.6H12.8M4 10.6H12.8" stroke="#7c8ce0" stroke-width=".7"/></svg>
<div class="t b" style="left:29.5px;top:112.03px;font-size:9.0px;letter-spacing:0.017px;color:#333;">F2-T18-ejemplo-ini</div>
<svg class="ic" style="left:27.8px;top:124.2px;width:10.5px;height:10.5px" viewBox="0 0 16 16"><rect x="1.4" y="5.2" width="9.4" height="8.6" rx=".8" fill="none" stroke="#5444f4" stroke-width="1.5"/><circle cx="10.6" cy="5.4" r="4.2" fill="#fff" fill-opacity=".55" stroke="#5444f4" stroke-width="1.5"/></svg>
<div class="t" style="left:42.0px;top:123.33px;font-size:9.0px;letter-spacing:0.001px;color:#6e6e6e;">DWire</div>
<div class="a" style="left:2.2px;top:135.1px;width:109.3px;height:11.3px;background:#e0dedc"></div>
<svg class="ic" style="left:27.8px;top:135.9px;width:10.5px;height:10.5px" viewBox="0 0 16 16"><rect x="1.4" y="5.2" width="9.4" height="8.6" rx=".8" fill="none" stroke="#7454cc" stroke-width="1.5"/><circle cx="10.6" cy="5.4" r="4.2" fill="#fff" fill-opacity=".55" stroke="#7454cc" stroke-width="1.5"/></svg>
<div class="t b" style="left:42.0px;top:135.03px;font-size:9.0px;letter-spacing:-0.070px;color:#333;">ShapeString</div>
<div class="a" style="left:67px;top:246px;width:6px;height:2px;background:repeating-linear-gradient(90deg,#c4c1bd 0 1px,transparent 1px 2px)"></div>
<div class="a" style="left:1px;top:249px;width:139px;height:190px;border:1px solid #d0cdc9;border-radius:2px"></div>
<div class="a" style="left:1.4px;top:249.5px;width:136.6px;height:170.3px;background:#fff;border:1px solid #d2cfcb;border-right:1.6px solid #cfccc8;border-bottom:1.6px solid #cbc8c4"></div>
<div class="a" style="left:2.4px;top:250.5px;width:62.1px;height:15px;background:linear-gradient(#fafaf9,#ecebe9);border-right:1px solid #d5d2ce;border-bottom:1px solid #d5d2ce"></div>
<div class="a" style="left:64.5px;top:250.5px;width:71.9px;height:15px;background:linear-gradient(#fafaf9,#ecebe9);border-bottom:1px solid #d5d2ce"></div>
<div class="t" style="left:5.4px;top:252.63px;font-size:9.0px;letter-spacing:0.270px;color:#353535;">Property</div>
<div class="t" style="left:67.0px;top:252.63px;font-size:9.0px;letter-spacing:0.088px;color:#353535;">Value</div>
<div class="a" style="left:2.4px;top:265.5px;width:134px;height:25.3px;background:#c1c0be"></div>
<div class="t b" style="left:17.6px;top:266.73px;font-size:9.0px;letter-spacing:-0.402px;color:#fff;">2 D</div>
<div class="t b" style="left:17.6px;top:278.53px;font-size:9.0px;letter-spacing:-0.538px;color:#fff;">Base</div>
<div class="a" style="left:15px;top:301.7px;width:121.4px;height:1px;background:#dddbd8"></div>
<div class="a" style="left:64px;top:290.8px;width:1px;height:11.6px;background:#dddbd8"></div>
<div class="a" style="left:2.4px;top:302.4px;width:134px;height:11.9px;background:#efeeed"></div>
<div class="a" style="left:15px;top:313.6px;width:121.4px;height:1px;background:#dddbd8"></div>
<div class="a" style="left:64px;top:302.4px;width:1px;height:11.9px;background:#dddbd8"></div>
<div class="a" style="left:2.4px;top:314.3px;width:134px;height:12.0px;background:#c1c0be"></div>
<div class="a" style="left:2.4px;top:326.3px;width:134px;height:12.1px;background:#efeeed"></div>
<div class="a" style="left:15px;top:337.7px;width:121.4px;height:1px;background:#dddbd8"></div>
<div class="a" style="left:64px;top:326.3px;width:1px;height:12.1px;background:#dddbd8"></div>
<div class="a" style="left:15px;top:351.1px;width:121.4px;height:1px;background:#dddbd8"></div>
<div class="a" style="left:64px;top:338.4px;width:1px;height:13.4px;background:#dddbd8"></div>
<div class="a" style="left:15px;top:363.3px;width:121.4px;height:1px;background:#dddbd8"></div>
<div class="a" style="left:64px;top:351.8px;width:1px;height:12.2px;background:#dddbd8"></div>
<div class="a" style="left:15px;top:375.3px;width:121.4px;height:1px;background:#dddbd8"></div>
<div class="a" style="left:64px;top:364px;width:1px;height:12.0px;background:#dddbd8"></div>
<svg class="a" style="left:8.5px;top:294px;width:4px;height:6px" viewBox="0 0 4 6"><path d="M.3 .4L3.8 3L.3 5.6Z" fill="#444"/></svg>
<div class="t" style="left:17.6px;top:291.53px;font-size:9.0px;letter-spacing:-0.040px;color:#353535;">Placement</div>
<div class="t" style="left:66.7px;top:291.53px;font-size:9.0px;letter-spacing:0.084px;color:#353535;">[(0,00 0,00 1,0…</div>
<div class="t" style="left:17.6px;top:303.63px;font-size:9.0px;letter-spacing:-0.155px;color:#353535;">Label</div>
<div class="t" style="left:66.7px;top:303.63px;font-size:9.0px;letter-spacing:-0.123px;color:#353535;">ShapeString</div>
<div class="t b" style="left:17.6px;top:315.63px;font-size:9.0px;letter-spacing:0.225px;color:#fff;">Draft</div>
<div class="t" style="left:17.6px;top:328.13px;font-size:9.0px;letter-spacing:-0.001px;color:#353535;">Font File</div>
<div class="t" style="left:66.7px;top:328.13px;font-size:9.0px;letter-spacing:0.231px;color:#353535;">/home/obijua…</div>
<div class="t" style="left:17.6px;top:340.43px;font-size:9.0px;letter-spacing:-0.636px;color:#353535;">Size</div>
<div class="t" style="left:66.7px;top:340.43px;font-size:9.0px;letter-spacing:-0.051px;color:#353535;">15 mm</div>
<div class="a" style="left:2.4px;top:352.1px;width:61.6px;height:11.8px;background:#f07746"></div>
<div class="a" style="left:65px;top:352.3px;width:71.2px;height:11.7px;background:#fff;border:1px solid #d8d5d1"></div>
<div class="a" style="left:66.2px;top:353.6px;width:24.4px;height:9.8px;background:#f07746"></div>
<div class="t" style="left:17.6px;top:353.13px;font-size:9.0px;letter-spacing:-0.062px;color:#fff;">String</div>
<div class="t" style="left:66.7px;top:353.13px;font-size:9.0px;letter-spacing:-0.101px;color:#fff;">¡Hola!</div>
<div class="t" style="left:17.6px;top:364.93px;font-size:9.0px;letter-spacing:-0.111px;color:#353535;">Tracking</div>
<div class="t" style="left:66.7px;top:364.93px;font-size:9.0px;letter-spacing:-0.066px;color:#353535;">0 mm</div>
<svg class="a" style="left:0;top:419px;width:70px;height:20px" viewBox="0 0 70 20"><path d="M1.8 1L6.6 16.5Q7.2 18 8.8 18H23.5Q25.2 18 25.8 16.5L30.8 1" fill="#f2f1f0" stroke="#85827d" stroke-width=".8"/><path d="M31.7 .5L37.2 17.3Q37.9 18.9 39.5 18.9H53Q54.6 18.9 55.2 17.3L60.4 .5" fill="#fff" stroke="#85827d" stroke-width=".8"/></svg>
<div class="t" style="left:6.9px;top:422.53px;font-size:9.0px;letter-spacing:0.019px;color:#353535;">View</div>
<div class="t" style="left:37.2px;top:422.53px;font-size:9.0px;letter-spacing:-0.303px;color:#353535;">Data</div>
<div class="a" style="left:788px;top:52.5px;width:5px;height:2px;background:repeating-linear-gradient(90deg,#c9c6c2 0 1px,transparent 1px 2px)"></div>
<div class="btn" style="left:783.7px;top:57.5px;width:13.9px;height:13.7px;border-color:#cfccc7;background:linear-gradient(#e6e4e1,#dedbd7)"></div>
<svg class="a" style="left:783.7px;top:57.5px;width:14px;height:14px" viewBox="0 0 14 14"><path d="M4.9 6.8V5.4C4.9 3.8 5.8 3 7.05 3C8.3 3 9.2 3.8 9.2 5.4V6.8" fill="none" stroke="#3aa488" stroke-width="1.5"/><rect x="3.4" y="6.5" width="7.3" height="4.8" rx=".6" fill="#0f8a6a" stroke="#0a5e48" stroke-width=".5"/><rect x="4.2" y="7.2" width="1.6" height="3.4" fill="#5cc0a4" opacity=".8"/></svg>
<div class="btn" style="left:783.7px;top:73.5px;width:13.9px;height:13.7px;border-color:#cfccc7;background:linear-gradient(#fdfdfc,#f0efed)"></div>
<svg class="a" style="left:783.7px;top:73.5px;width:14px;height:14px" viewBox="0 0 14 14"><path d="M2.6 10.8L10.8 3.2" stroke="#0a5e48" stroke-width="2.0999999999999996" stroke-linecap="round" fill="none"/><path d="M2.6 10.8L10.8 3.2" stroke="#0f8a6a" stroke-width="1.0999999999999999" stroke-linecap="round" fill="none"/><path d="M4.3 9.2L5.1 5.3L9.1 4.8L8.3 8.7Z" fill="#0f8a6a" stroke="#0a5e48" stroke-width=".8" stroke-linejoin="round"/></svg>
<div class="btn" style="left:783.7px;top:89.4px;width:13.9px;height:13.7px;border-color:#cfccc7;background:linear-gradient(#fdfdfc,#f0efed)"></div>
<svg class="a" style="left:783.7px;top:89.4px;width:14px;height:14px" viewBox="0 0 14 14"><path d="M7 3V10" stroke="#0a5e48" stroke-width="2.7" stroke-linecap="round" fill="none"/><path d="M7 3V10" stroke="#0f8a6a" stroke-width="1.7" stroke-linecap="round" fill="none"/><path d="M2.8 10.2H11.3" stroke="#0a5e48" stroke-width="2.9000000000000004" stroke-linecap="butt" fill="none"/><path d="M2.8 10.2H11.3" stroke="#0f8a6a" stroke-width="1.9000000000000001" stroke-linecap="butt" fill="none"/></svg>
<div class="btn" style="left:783.7px;top:105.4px;width:13.9px;height:13.7px;border-color:#cfccc7;background:linear-gradient(#e6e4e1,#dedbd7)"></div>
<svg class="a" style="left:783.7px;top:105.4px;width:14px;height:14px" viewBox="0 0 14 14"><path d="M5.1 3.2V11.2M8.8 3.2V11.2M2.9 5.4H11M2.9 9.1H11" stroke="#0a5e48" stroke-width="3.0" stroke-linecap="round" fill="none"/><path d="M5.1 3.2V11.2M8.8 3.2V11.2M2.9 5.4H11M2.9 9.1H11" stroke="#0f8a6a" stroke-width="1.9999999999999998" stroke-linecap="round" fill="none"/><rect x="6.3" y="6.6" width="1.3" height="1.3" fill="#eef6f3"/></svg>
<div class="btn" style="left:783.7px;top:121.4px;width:13.9px;height:13.7px;border-color:#cfccc7;background:linear-gradient(#fdfdfc,#f0efed)"></div>
<svg class="a" style="left:783.7px;top:121.4px;width:14px;height:14px" viewBox="0 0 14 14"><path d="M3.2 3.3L10.6 10.8M10.6 3.3L3.2 10.8" stroke="#0a5e48" stroke-width="3.2" stroke-linecap="round" fill="none"/><path d="M3.2 3.3L10.6 10.8M10.6 3.3L3.2 10.8" stroke="#0f8a6a" stroke-width="2.2" stroke-linecap="round" fill="none"/></svg>
<div class="btn" style="left:783.7px;top:137.4px;width:13.9px;height:13.7px;border-color:#cfccc7;background:linear-gradient(#fdfdfc,#f0efed)"></div>
<svg class="a" style="left:783.7px;top:137.4px;width:14px;height:14px" viewBox="0 0 14 14"><path d="M2.8 6L10 9.8M4.5 2.9L11.3 6.5" stroke="#0a5e48" stroke-width="2.3" stroke-linecap="round" fill="none"/><path d="M2.8 6L10 9.8M4.5 2.9L11.3 6.5" stroke="#0f8a6a" stroke-width="1.3" stroke-linecap="round" fill="none"/></svg>
<div class="btn" style="left:783.7px;top:153.3px;width:13.9px;height:13.7px;border-color:#cfccc7;background:linear-gradient(#e6e4e1,#dedbd7)"></div>
<svg class="a" style="left:783.7px;top:153.3px;width:14px;height:14px" viewBox="0 0 14 14"><path d="M4.6 9.4L10.3 4.5" stroke="#0a5e48" stroke-width="2.7" stroke-linecap="round" fill="none"/><path d="M4.6 9.4L10.3 4.5" stroke="#0f8a6a" stroke-width="1.7" stroke-linecap="round" fill="none"/><circle cx="4.3" cy="9.6" r="2.3" fill="#0f8a6a" stroke="#0a5e48" stroke-width=".5"/></svg>
<div class="btn" style="left:783.7px;top:169.3px;width:13.9px;height:13.7px;border-color:#cfccc7;background:linear-gradient(#fdfdfc,#f0efed)"></div>
<svg class="a" style="left:783.7px;top:169.3px;width:14px;height:14px" viewBox="0 0 14 14"><circle cx="6.8" cy="6.9" r="3" fill="none" stroke="#0a5e48" stroke-width="1.6"/><circle cx="6.8" cy="6.9" r="3" fill="none" stroke="#0f8a6a" stroke-width=".9"/><circle cx="6.8" cy="3.7" r="1.5" fill="#0f8a6a" stroke="#0a5e48" stroke-width=".5"/><circle cx="6.8" cy="10.1" r="1.5" fill="#0f8a6a" stroke="#0a5e48" stroke-width=".5"/><circle cx="3.6" cy="6.9" r="1.5" fill="#0f8a6a" stroke="#0a5e48" stroke-width=".5"/><circle cx="10" cy="6.9" r="1.5" fill="#0f8a6a" stroke="#0a5e48" stroke-width=".5"/></svg>
<div class="btn" style="left:783.7px;top:185.3px;width:13.9px;height:13.7px;border-color:#cfccc7;background:linear-gradient(#e6e4e1,#dedbd7)"></div>
<svg class="a" style="left:783.7px;top:185.3px;width:14px;height:14px" viewBox="0 0 14 14"><circle cx="6.8" cy="6.8" r="4.3" fill="#0f8a6a" stroke="#0a5e48" stroke-width=".7"/><circle cx="6.8" cy="6.8" r="1.9" fill="#3aa88a" stroke="#8fd4be" stroke-width=".7"/><circle cx="6.8" cy="6.8" r=".6" fill="#0a5e48"/></svg>
<div class="btn" style="left:783.7px;top:201.2px;width:13.9px;height:13.7px;border-color:#cfccc7;background:linear-gradient(#fdfdfc,#f0efed)"></div>
<svg class="a" style="left:783.7px;top:201.2px;width:14px;height:14px" viewBox="0 0 14 14"><path d="M3.7 7.4H10.2" stroke="#0f8a6a" stroke-width=".7"/><circle cx="3.7" cy="7.4" r="1.25" fill="#0f8a6a" stroke="#0a5e48" stroke-width=".5"/><circle cx="6.95" cy="7.4" r="1.25" fill="#0f8a6a" stroke="#0a5e48" stroke-width=".5"/><circle cx="10.2" cy="7.4" r="1.25" fill="#0f8a6a" stroke="#0a5e48" stroke-width=".5"/></svg>
<div class="btn" style="left:783.7px;top:217.2px;width:13.9px;height:13.7px;border-color:#cfccc7;background:linear-gradient(#fdfdfc,#f0efed)"></div>
<svg class="a" style="left:783.7px;top:217.2px;width:14px;height:14px" viewBox="0 0 14 14"><path d="M3.6 6.6L9.7 10.2" stroke="#0a5e48" stroke-width="2.8" stroke-linecap="butt" fill="none"/><path d="M3.6 6.6L9.7 10.2" stroke="#0f8a6a" stroke-width="1.8" stroke-linecap="butt" fill="none"/><circle cx="9.3" cy="4.3" r="1.5" fill="#0f8a6a" stroke="#0a5e48" stroke-width=".5"/></svg>
<div class="btn" style="left:783.7px;top:233.2px;width:13.9px;height:13.7px;border-color:#cfccc7;background:linear-gradient(#fdfdfc,#f0efed)"></div>
<svg class="a" style="left:783.7px;top:233.2px;width:14px;height:14px" viewBox="0 0 14 14"><path d="M6.9 3.6V10.1M3.6 6.85H10.2" stroke="#0a5e48" stroke-width="2.7" stroke-linecap="butt" fill="none"/><path d="M6.9 3.6V10.1M3.6 6.85H10.2" stroke="#0f8a6a" stroke-width="1.7" stroke-linecap="butt" fill="none"/></svg>
<div class="btn" style="left:783.7px;top:249.1px;width:13.9px;height:13.7px;border-color:#cfccc7;background:linear-gradient(#fdfdfc,#f0efed)"></div>
<svg class="a" style="left:783.7px;top:249.1px;width:14px;height:14px" viewBox="0 0 14 14"><path d="M3.6 10.4V6.6M3.6 8.6H5.6M5.2 5.2L7.6 3.6L10.2 4.4M8 3.6V6M9 7.6H10.6V10.6H8.4" stroke="#0f8a6a" stroke-width="1.3" fill="none" stroke-opacity=".85"/></svg>
<div class="btn" style="left:783.7px;top:265.1px;width:13.9px;height:13.7px;border-color:#cfccc7;background:linear-gradient(#e6e4e1,#dedbd7)"></div>
<svg class="a" style="left:783.7px;top:265.1px;width:14px;height:14px" viewBox="0 0 14 14"><rect x="2.9" y="3.5" width="8.2" height="8.2" rx=".6" fill="#12b088" stroke="#0a5e48" stroke-width=".8"/><circle cx="5.6" cy="8.4" r="1" fill="none" stroke="#0a5e48" stroke-width=".7"/></svg>
<div class="a" style="left:143px;top:419px;width:133px;height:20px;background:#f7f6f5;border:1px solid #d0cdc9;border-top:none;border-radius:0 0 3px 3px"></div>
<svg class="ic" style="left:147.4px;top:424.0px;width:10px;height:10px" viewBox="0 0 16 16"><path d="M1 1.6H6.4V5.4H4.6V13.4H1Z" fill="#e4401e"/><circle cx="9.6" cy="8.8" r="3.6" fill="#1c30a4"/><circle cx="9.6" cy="8.8" r="4.5" fill="none" stroke="#1c30a4" stroke-width="1.8" stroke-dasharray="1.77 1.77"/><circle cx="9.6" cy="8.8" r="1.5" fill="#f7f6f5"/></svg>
<div class="t" style="left:162.4px;top:423.43px;font-size:9.0px;letter-spacing:-0.024px;color:#353535;">F2-T18-ejemplo-ini : 1*</div>
<svg class="a" style="left:260.5px;top:426.3px;width:7.5px;height:7px" viewBox="0 0 8 8"><path d="M1.2 1.2L6.8 6.8M6.8 1.2L1.2 6.8" stroke="#4a4a4a" stroke-width="2.2"/></svg>
<div class="a" style="left:0;top:439px;width:800px;height:1px;background:#dfddda"></div>
<div class="t" style="left:723.2px;top:443.53px;font-size:9.0px;letter-spacing:-0.109px;color:#353535;">165.87 x 96.04 mm</div>
</div>
</body></html>
